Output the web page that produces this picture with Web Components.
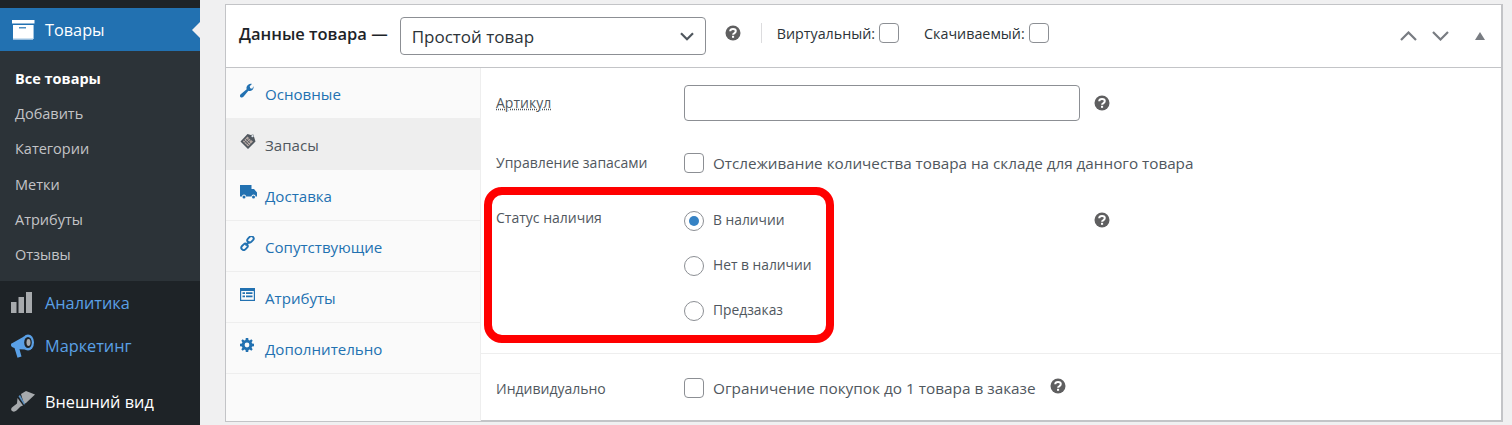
<!DOCTYPE html>
<html lang="ru"><head><meta charset="utf-8"><title>Данные товара</title>
<style>
html,body{margin:0;padding:0;height:425px;overflow:hidden;background:#f0f0f1;font-family:"Open Sans","Noto Sans",sans-serif}
body{display:flex;align-items:flex-start}
</style></head><body>
<wp-sidebar></wp-sidebar>
<product-panel></product-panel>
<script>
const icons={
archive:'<svg width="24" height="20" viewBox="0 0 24 20"><path fill="#fff" d="M1 0h22.500v3.500H1z"/><path fill="#fff" d="M2 5h20v14.500H2z"/><path fill="#2271b1" d="M8 7.200h7v1.200H8z"/><path fill="#9ec4e2" d="M2 18.500h20v1H2zM22 5h1v14h-1z"/></svg>',
bars:'<svg width="21" height="21" viewBox="0 0 21 21"><path fill="#a7aaad" d="M0 10h5.500v11H0zM7.500 5h5.500v16H7.500zM15 0h6v21h-6z"/></svg>',
mega:'<svg width="23" height="24" viewBox="0 0 23 24"><path fill="#5aa0e6" d="M0 10.500Q0 9.300 1.500 9L13 2.500 14.500 15.500 8.500 15.200 10.500 22.500 6.500 23.800 3.500 14 2 13.500Q.5 13 0 11.500z"/><ellipse cx="17" cy="8.500" rx="6" ry="8" fill="#5aa0e6"/><ellipse cx="17" cy="8.500" rx="3.800" ry="5.600" fill="#1e2327"/><ellipse cx="17.500" cy="8.500" rx="2" ry="3.400" fill="#a7aaad"/></svg>',
brush:'<svg width="24" height="21" viewBox="0 0 24 21"><path fill="#a7aaad" d="M10 3L15 0 24 3.500 15 12 13 13z"/><path fill="#5a8fc0" d="M9 4l5 9-1 .8-5.500-8.500z"/><path fill="#a7aaad" d="M6.500 7l5.500 7.500-2.500 1L5.500 19.500C4 21 1.500 21 .5 19.500-.3 18.200.3 17 1.500 16L6 12.500z"/></svg>',
wrench:'<svg width="14" height="15" viewBox="0 0 14 15"><path fill="#2271b1" d="M13.500 3.200c.5 2.300-1 4.600-3.300 4.800-.7.100-1.300 0-1.800-.2l-5 6c-.8 1-2.300 1-3 .2-.7-.8-.5-2 .3-2.800l6-5c-.3-.7-.3-1.500-.1-2.200C7.200 2 9.600.4 11.900 1L9.700 3.300l.5 2 2 .5z"/></svg>',
inv:'<svg width="16" height="17" viewBox="0 0 16 17"><path fill="#50575e" d="M7.500 1l3.300 1 2.500-.5.800 2.500L15.500 8.500 8 16 .5 8.500z"/><path fill="#b5a9a4" d="M7.500 3.500L13 8.500 8 13.500 2.800 8.500z"/><path stroke="#50575e" stroke-width=".8" fill="none" d="M5.500 5.500l5 5M4 7l5 5M9 4.800l2.500 2.500M9.500 5L4.500 10M11 6.500L6 11.500"/><circle cx="12.500" cy="3.200" r="1.100" fill="#dfe7ee"/></svg>',
truck:'<svg width="17" height="14" viewBox="0 0 17 14"><path fill="#2271b1" d="M0 0h11.500v4h2.500L17 7.500V11.500h-1.500a2 2 0 0 0-4 0H6a2 2 0 0 0-4 0H0z"/><circle cx="4" cy="12" r="1.500" fill="#2271b1"/><circle cx="13.500" cy="12" r="1.500" fill="#2271b1"/></svg>',
link:'<svg width="15" height="15" viewBox="0 0 15 15"><g fill="none" stroke="#2271b1" stroke-width="1.900"><rect x="7" y="1" width="7" height="4.700" rx="2.300" transform="rotate(-45 10.500 3.400)"/><rect x="1" y="8.500" width="7" height="4.700" rx="2.300" transform="rotate(-45 4.500 10.800)"/><path d="M5.500 9.500l4-4"/></g></svg>',
attr:'<svg width="15" height="13" viewBox="0 0 15 13"><path fill="#2271b1" d="M0 0h15v13H0z"/><path fill="#fafafa" d="M1.200 3h12.600v8.800H1.200z"/><path fill="#2271b1" d="M2.500 4.300h2.500v1.800H2.500zM6 4.300h6.500v1.800H6zM2.500 7.500h2.500v1.800H2.500zM6 7.500h6.500v1.800H6z"/></svg>',
gear:'<svg width="14" height="14" viewBox="0 0 14 14"><path fill="#2271b1" fill-rule="evenodd" d="M5.800 0h2.400l.3 1.900 1.200.5L11.300 1.300 12.700 2.700 11.600 4.300l.5 1.200L14 5.800v2.400l-1.900.3-.5 1.200 1.100 1.600-1.400 1.400-1.600-1.100-1.200.5L8.200 14H5.800l-.3-1.900-1.200-.5-1.600 1.100-1.400-1.400 1.100-1.600-.5-1.200L0 8.200V5.800l1.900-.3.500-1.200L1.300 2.700 2.700 1.300l1.600 1.100 1.200-.5zM7 4.600a2.400 2.400 0 1 0 0 4.800 2.400 2.400 0 0 0 0-4.800z"/></svg>'
};

class WpMenuItem extends HTMLElement{
  connectedCallback(){
    const s=this.attachShadow({mode:'open'});
    const tone=this.getAttribute('tone')||'';
    s.innerHTML=`<style>
    :host{display:flex;align-items:center;box-sizing:border-box;height:43px;padding-left:11px;font-size:16.300px;color:#fff;background:transparent}
    :host([tone=current]){background:#2271b1;position:relative}
    :host([tone=link]){color:#5aa0e6}
    .i{width:34px;display:flex;align-items:center;flex:none}
    .t{white-space:nowrap}
    .arrow{position:absolute;right:0;top:50%;margin-top:-8px;border:8px solid transparent;border-right-color:#f0f0f1;border-left:0}
    </style><span class="i">${icons[this.getAttribute('icon')]}</span><span class="t"><slot></slot></span>${tone==='current'?'<span class="arrow"></span>':''}`;
  }
}
customElements.define('wp-menu-item',WpMenuItem);

class WpSubItem extends HTMLElement{
  connectedCallback(){
    this.attachShadow({mode:'open'}).innerHTML=`<style>
    :host{display:block;height:35.200px;line-height:35.200px;padding-left:15px;font-size:14.500px;color:#c3c4c7;white-space:nowrap}
    :host([current]){color:#fff;font-weight:700}
    </style><slot></slot>`;
  }
}
customElements.define('wp-sub-item',WpSubItem);

class WpSidebar extends HTMLElement{
  connectedCallback(){
    this.attachShadow({mode:'open'}).innerHTML=`<style>
    :host{display:block;width:200px;height:425px;flex:none;background:#1e2327;padding-top:8px;box-sizing:border-box;overflow:hidden}
    .sub{background:#2c3338;height:230px;box-sizing:border-box;padding-top:10px}
    .gap{height:13px}
    </style>
    <wp-menu-item icon="archive" tone="current">Товары</wp-menu-item>
    <div class="sub">
      <wp-sub-item current>Все товары</wp-sub-item>
      <wp-sub-item>Добавить</wp-sub-item>
      <wp-sub-item>Категории</wp-sub-item>
      <wp-sub-item>Метки</wp-sub-item>
      <wp-sub-item>Атрибуты</wp-sub-item>
      <wp-sub-item>Отзывы</wp-sub-item>
    </div>
    <wp-menu-item icon="bars" tone="link">Аналитика</wp-menu-item>
    <wp-menu-item icon="mega" tone="link">Маркетинг</wp-menu-item>
    <div class="gap"></div>
    <wp-menu-item icon="brush">Внешний вид</wp-menu-item>`;
  }
}
customElements.define('wp-sidebar',WpSidebar);

class HelpTip extends HTMLElement{
  connectedCallback(){
    this.attachShadow({mode:'open'}).innerHTML=`<style>
    :host{display:inline-flex;width:16px;height:16px;flex:none}
    </style><svg width="16" height="16" viewBox="0 0 16 16"><circle cx="8" cy="8" r="7.500" fill="#5f5f60"/><path fill="none" stroke="#fff" stroke-width="2" d="M5.200 6.200C5.300 4.600 6.500 3.900 8 3.900c1.600 0 2.800.9 2.800 2.200 0 1.200-.8 1.700-1.600 2.200-.7.400-1.100.8-1.100 1.500"/><rect x="7" y="10.800" width="2.100" height="2" fill="#fff"/></svg>`;
  }
}
customElements.define('help-tip',HelpTip);

class UiCheck extends HTMLElement{
  connectedCallback(){
    this.attachShadow({mode:'open'}).innerHTML=`<style>
    :host{display:inline-block;width:20px;height:20px;box-sizing:border-box;border:1px solid #8c8f94;border-radius:4px;background:#fff;flex:none}
    </style>`;
  }
}
customElements.define('ui-check',UiCheck);

class UiRadio extends HTMLElement{
  connectedCallback(){
    this.attachShadow({mode:'open'}).innerHTML=`<style>
    :host{display:flex;align-items:center;gap:9px;height:20px;font-size:13.800px;color:#50575e;white-space:nowrap}
    .r{width:20px;height:20px;box-sizing:border-box;border:1px solid #8c8f94;border-radius:50%;display:flex;align-items:center;justify-content:center;flex:none;background:#fff}
    :host([checked]) .r::after{content:"";width:10px;height:10px;border-radius:50%;background:#3582c4}
    .t{position:relative;top:-2px}
    </style><span class="r"></span><span class="t"><slot></slot></span>`;
  }
}
customElements.define('ui-radio',UiRadio);

class TabItem extends HTMLElement{
  connectedCallback(){
    this.attachShadow({mode:'open'}).innerHTML=`<style>
    :host{display:flex;align-items:center;box-sizing:border-box;height:51px;padding:4px 0 0 14px;border-bottom:1px solid #eee;font-size:15.100px;color:#2271b1;white-space:nowrap}
    :host([active]){background:#eee;color:#50575e}
    .i{width:25px;flex:none;display:flex;align-items:center;justify-content:flex-start;position:relative;top:-5px}
    </style><span class="i">${icons[this.getAttribute('icon')]}</span><slot></slot>`;
  }
}
customElements.define('tab-item',TabItem);

class FormRow extends HTMLElement{
  connectedCallback(){
    this.attachShadow({mode:'open'}).innerHTML=`<style>
    :host{display:flex;box-sizing:border-box;padding-left:15px;font-size:14px;color:#50575e;align-items:center}
    .l{width:188px;flex:none;white-space:nowrap}
    .c{display:flex;align-items:center;flex:1;min-width:0}
    </style><span class="l"><slot name="label"></slot></span><div class="c"><slot></slot></div>`;
  }
}
customElements.define('form-row',FormRow);

class ProductPanel extends HTMLElement{
  connectedCallback(){
    this.attachShadow({mode:'open'}).innerHTML=`<style>
    :host{display:block;flex:none;box-sizing:border-box;width:1278px;height:418px;margin:4px 0 0 25px;background:#fff;border:1px solid #c3c4c7;border-width:1px 2px 2px 1px;position:relative;color:#1d2327}
    header{display:flex;align-items:center;height:63px;box-sizing:border-box;border-bottom:1px solid #c3c4c7;padding-left:13px}
    h2{margin:0;font-size:16.500px;font-weight:600;white-space:nowrap;position:relative;top:-3px;color:#1d2327}
    .select{width:306px;height:38px;box-sizing:border-box;margin-left:12px;border:1px solid #8c8f94;border-radius:4px;display:flex;align-items:center;justify-content:space-between;padding:0 11px 0 11px;font-size:17px;color:#2c3338;white-space:nowrap;font-weight:500}
    .hd-help{margin-left:19px;position:relative;top:-3px}
    .sep{width:1px;height:20px;background:#dcdcde;margin:0 15px 0 20px;position:relative;top:-3px}
    .opt{display:flex;align-items:center;gap:4px;font-size:14.300px;white-space:nowrap;color:#2c3338;position:relative;top:-3px}
    .opt+.opt{margin-left:25px}
    .ctl{margin-left:auto;display:flex;align-items:center;padding-right:16px;position:relative;top:0}
    .body{display:flex;height:353px}
    nav{width:255px;box-sizing:border-box;flex:none;background:#fafafa;border-right:1px solid #eee;line-height:1}
    main{flex:1;min-width:0}
    .r1{height:70px}
    .input{width:396px;height:36px;box-sizing:border-box;border:1px solid #8c8f94;border-radius:4px;background:#fff;flex:none}
    .up{position:relative;top:-1px}
    abbr{text-decoration:underline dotted;text-underline-offset:1px}
    .help1{margin-left:14px}
    .r2{height:50px}
    .muted{margin-left:9px;white-space:nowrap;font-size:15.250px;position:relative}
    .r4 .muted{font-size:15.350px}
    .status{height:166px;border-bottom:1px solid #eee;display:flex;align-items:flex-start;box-sizing:border-box;padding:23px 0 0 15px;font-size:14px;color:#50575e}
    .status .l{width:188px;flex:none;position:relative;top:-3px}
    .radios{display:flex;flex-direction:column;gap:25px;width:396px;flex:none}
    .status help-tip{margin:1px 0 0 14px}
    .r4{height:67px;padding-top:1px}
    .help2{margin-left:14px;position:relative;top:-2px}
    .mark{position:absolute;left:258px;top:182px;width:350px;height:156px;box-sizing:border-box;border:8px solid #f00;border-radius:18px;pointer-events:none}
    </style>
    <header>
      <h2>Данные товара —</h2>
      <div class="select"><span>Простой товар</span>
        <svg width="14" height="9" viewBox="0 0 14 9"><path d="M1 1.200l6 6 6-6" fill="none" stroke="#50575e" stroke-width="2.200"/></svg></div>
      <help-tip class="hd-help"></help-tip>
      <span class="sep"></span>
      <label class="opt">Виртуальный:<ui-check></ui-check></label>
      <label class="opt">Скачиваемый:<ui-check></ui-check></label>
      <div class="ctl">
        <svg width="17" height="10" viewBox="0 0 17 10"><path d="M1 9l7.500-7.500L16 9" fill="none" stroke="#787c82" stroke-width="2.200"/></svg>
        <svg style="margin-left:15px" width="17" height="10" viewBox="0 0 17 10"><path d="M1 1l7.500 7.500L16 1" fill="none" stroke="#787c82" stroke-width="2.200"/></svg>
        <svg style="margin-left:26px" width="10" height="8" viewBox="0 0 10 8"><path d="M5 0l5 8H0z" fill="#787c82"/></svg>
      </div>
    </header>
    <div class="body">
      <nav>
        <tab-item icon="wrench">Основные</tab-item>
        <tab-item icon="inv" active>Запасы</tab-item>
        <tab-item icon="truck">Доставка</tab-item>
        <tab-item icon="link">Сопутствующие</tab-item>
        <tab-item icon="attr">Атрибуты</tab-item>
        <tab-item icon="gear">Дополнительно</tab-item>
      </nav>
      <main>
        <form-row class="r1"><abbr slot="label" class="up">Артикул</abbr><span class="input"></span><help-tip class="help1"></help-tip></form-row>
        <form-row class="r2"><span slot="label" class="up">Управление запасами</span><ui-check></ui-check><span class="muted">Отслеживание количества товара на складе для данного товара</span></form-row>
        <div class="status"><span class="l">Статус наличия</span>
          <div class="radios"><ui-radio checked>В наличии</ui-radio><ui-radio>Нет в наличии</ui-radio><ui-radio>Предзаказ</ui-radio></div>
          <help-tip></help-tip>
        </div>
        <form-row class="r4"><span slot="label">Индивидуально</span><ui-check></ui-check><span class="muted">Ограничение покупок до 1 товара в заказе</span><help-tip class="help2"></help-tip></form-row>
      </main>
    </div>
    <div class="mark"></div>`;
  }
}
customElements.define('product-panel',ProductPanel);
</script>
</body></html>
